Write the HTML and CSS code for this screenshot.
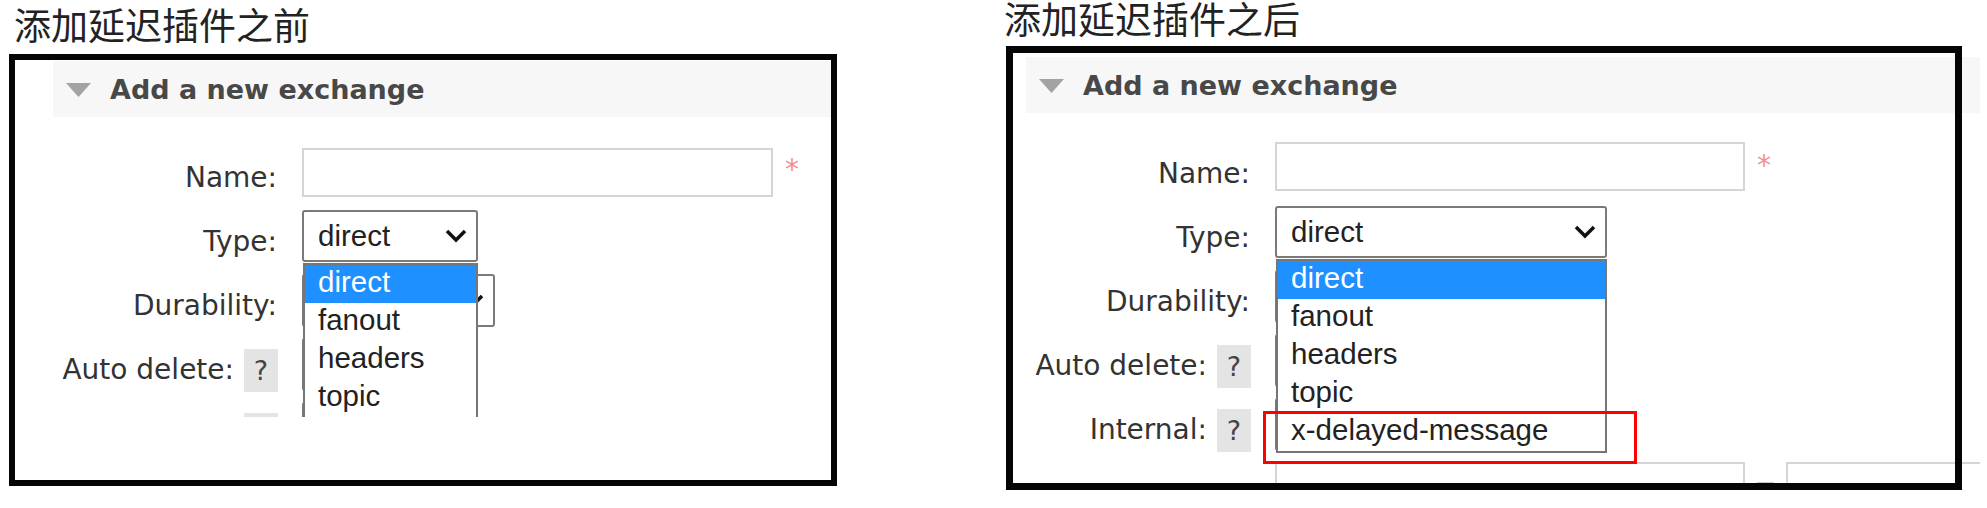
FILE: index.html
```html
<!DOCTYPE html>
<html lang="zh-CN">
<head>
  <meta charset="UTF-8">
  <meta name="viewport" content="width=device-width, initial-scale=1.0">
  <title>添加延迟插件前后对比</title>
  <link rel="stylesheet" href="styles.css">
</head>
<body>
  <div class="figure before">
    <h2 class="caption">添加延迟插件之前</h2>
    <div class="frame">
      <div class="shot">
        <div class="section-head">
          <svg class="toggle" width="25" height="14" viewBox="0 0 25 14"><polygon points="0,0 25,0 12.5,14"/></svg>
          <span>Add a new exchange</span>
        </div>
        <div class="form">
          <div class="label">Name:</div>
          <div class="field">
            <span class="text-input"></span>
            <span class="mand">*</span>
          </div>

          <div class="label">Type:</div>
          <div class="field">
            <div class="select type-select">
              <span>direct</span>
              <svg class="chevron" width="22" height="14" viewBox="0 0 22 14"><polyline points="2,2 11,11 20,2"/></svg>
            </div>
            <ul class="options">
              <li class="picked">direct</li>
              <li>fanout</li>
              <li>headers</li>
              <li>topic</li>
            </ul>
          </div>

          <div class="label">Durability:</div>
          <div class="field">
            <div class="select durability-select">
              <span>Durable</span>
              <svg class="chevron" width="22" height="14" viewBox="0 0 22 14"><polyline points="2,2 11,11 20,2"/></svg>
            </div>
          </div>

          <div class="label help-label">Auto delete: <span class="help">?</span></div>
          <div class="field">
            <div class="select small-select">
              <span>No</span>
              <svg class="chevron" width="22" height="14" viewBox="0 0 22 14"><polyline points="2,2 11,11 20,2"/></svg>
            </div>
          </div>

          <div class="label help-label">Internal: <span class="help">?</span></div>
          <div class="field">
            <div class="select small-select">
              <span>No</span>
              <svg class="chevron" width="22" height="14" viewBox="0 0 22 14"><polyline points="2,2 11,11 20,2"/></svg>
            </div>
          </div>
        </div>
      </div>
    </div>
  </div>

  <div class="figure after">
    <h2 class="caption">添加延迟插件之后</h2>
    <div class="frame">
      <div class="shot">
        <div class="section-head">
          <svg class="toggle" width="25" height="14" viewBox="0 0 25 14"><polygon points="0,0 25,0 12.5,14"/></svg>
          <span>Add a new exchange</span>
        </div>
        <div class="form">
          <div class="label">Name:</div>
          <div class="field">
            <span class="text-input"></span>
            <span class="mand">*</span>
          </div>

          <div class="label">Type:</div>
          <div class="field">
            <div class="select type-select">
              <span>direct</span>
              <svg class="chevron" width="22" height="14" viewBox="0 0 22 14"><polyline points="2,2 11,11 20,2"/></svg>
            </div>
            <ul class="options">
              <li class="picked">direct</li>
              <li>fanout</li>
              <li>headers</li>
              <li>topic</li>
              <li>x-delayed-message</li>
            </ul>
            <!-- highlight around the new plugin type -->
            <div class="mark"></div>
          </div>

          <div class="label">Durability:</div>
          <div class="field">
            <div class="select durability-select">
              <span>Durable</span>
              <svg class="chevron" width="22" height="14" viewBox="0 0 22 14"><polyline points="2,2 11,11 20,2"/></svg>
            </div>
          </div>

          <div class="label help-label">Auto delete: <span class="help">?</span></div>
          <div class="field">
            <div class="select small-select">
              <span>No</span>
              <svg class="chevron" width="22" height="14" viewBox="0 0 22 14"><polyline points="2,2 11,11 20,2"/></svg>
            </div>
          </div>

          <div class="label help-label">Internal: <span class="help">?</span></div>
          <div class="field">
            <div class="select small-select">
              <span>No</span>
              <svg class="chevron" width="22" height="14" viewBox="0 0 22 14"><polyline points="2,2 11,11 20,2"/></svg>
            </div>
          </div>

          <!-- arguments row, only its top edge shows in the crop -->
          <div class="label"></div>
          <div class="field">
            <span class="text-input"></span>
            <span class="equals">=</span>
            <span class="text-input arg-value"></span>
          </div>
        </div>
      </div>
    </div>
  </div>
</body>
</html>
```

FILE: styles.css
```css
body {
  margin: 0;
  display: flex;
  align-items: flex-start;
  background: #fff;
  font-family: "DejaVu Sans", Verdana, sans-serif;
  color: #333;
}
.figure {
  flex: none;
}
.before {
  margin-left: 9px;
  width: 828px;
}
.after {
  margin-left: 169px;
  width: 956px;
}
.caption {
  margin: 6px 0 12px;
  padding-left: 5px;
  font: 400 37px/36px "Noto Sans CJK SC", sans-serif;
  color: #222;
  white-space: nowrap;
}
.after .caption {
  margin: 0 0 10px -2px;
  padding-left: 0;
}

/* black rectangle drawn over the pasted screenshot */
.frame {
  position: relative;
  box-sizing: border-box;
}
.frame::after {
  content: "";
  position: absolute;
  top: 0;
  left: 0;
  right: 0;
  bottom: 0;
  border: 6px solid #050505;
  z-index: 5;
  pointer-events: none;
}
.before .frame {
  height: 432px;
  padding: 7px 0 0 44px;
}
.after .frame {
  height: 444px;
  padding: 11px 0 0 20px;
}
.after .frame::after {
  border-width: 7px;
}
.shot {
  overflow: hidden;
  background: #fff;
}
.before .shot {
  width: 778px;
  height: 356px;
}
.after .shot {
  width: 954px;
  height: 427px;
}

.section-head {
  display: flex;
  align-items: flex-start;
  box-sizing: border-box;
  height: 56px;
  padding: 2px 0 0 13px;
  background: #f7f7f7;
  font: bold 27px/54px "DejaVu Sans", Verdana, sans-serif;
  color: #484848;
  white-space: nowrap;
}
.toggle {
  margin: 20px 19px 0 0;
  fill: #a3a3a3;
}

.form {
  display: grid;
  grid-template-columns: 225px 1fr;
  grid-auto-rows: 64px;
  column-gap: 24px;
  padding-top: 29px;
}
.label {
  font-size: 28px;
  line-height: 64px;
  text-align: right;
  padding-right: 1px;
  white-space: nowrap;
  color: #333;
}
.help-label {
  display: flex;
  justify-content: flex-end;
  align-items: flex-start;
  gap: 10px;
  padding-right: 0;
}
.help {
  width: 34px;
  height: 43px;
  margin-top: 11px;
  background: #e4e4e4;
  text-align: center;
  font-size: 27px;
  line-height: 43px;
  color: #444;
}
.field {
  position: relative;
  display: flex;
  align-items: flex-start;
}
.text-input {
  flex: none;
  box-sizing: border-box;
  width: 471px;
  height: 49px;
  margin-top: 2px;
  border: 2px solid #d5d5d5;
  background: #fff;
}
.after .text-input {
  width: 470px;
  margin-top: 0;
}
.after .arg-value {
  width: 300px;
}
.mand {
  margin: 10px 0 0 12px;
  font-size: 28px;
  line-height: 28px;
  color: #f58e8e;
}
.equals {
  margin: 0 9px;
  font-size: 27px;
  line-height: 48px;
  color: #222;
}

.select {
  flex: none;
  display: flex;
  align-items: center;
  justify-content: space-between;
  box-sizing: border-box;
  height: 52px;
  padding: 0 9px 0 14px;
  border: 2px solid #7a7a7a;
  border-radius: 3px;
  background: #fff;
  font: 29.5px/48px "Liberation Sans", Arial, sans-serif;
  color: #222;
}
.chevron {
  fill: none;
  stroke: #111;
  stroke-width: 3.5;
}
.before .type-select {
  width: 176px;
}
.after .type-select {
  width: 332px;
}
.durability-select {
  width: 193px;
  height: 53px;
}
.small-select {
  width: 110px;
  height: 53px;
}

.options {
  position: absolute;
  top: 53px;
  left: 1px;
  z-index: 2;
  box-sizing: border-box;
  margin: 0;
  padding: 0;
  list-style: none;
  border: 2px solid #767676;
  background: #fff;
  font: 29.5px "Liberation Sans", Arial, sans-serif;
  color: #222;
}
.before .options {
  width: 175px;
}
.after .options {
  width: 331px;
}
.options li {
  box-sizing: border-box;
  height: 38px;
  padding: 0 0 4px 13px;
  line-height: 34px;
  white-space: nowrap;
}
.options .picked {
  background: #1e90ff;
  color: #fff;
}
.mark {
  position: absolute;
  top: 205px;
  left: -12px;
  z-index: 3;
  box-sizing: border-box;
  width: 374px;
  height: 53px;
  border: 3px solid #f00;
}
```
